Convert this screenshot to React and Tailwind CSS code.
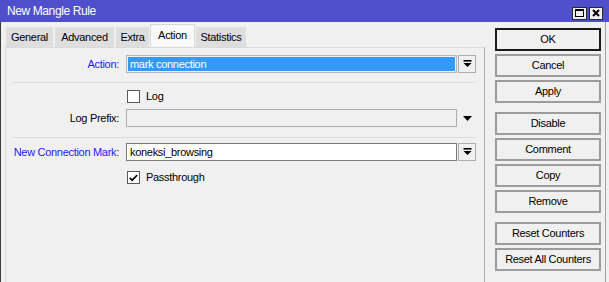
const font = { fontFamily: '"Liberation Sans", Arial, sans-serif' };

const DropIcon = () => (
  <svg width="9" height="8" viewBox="0 0 9 8">
    <rect x="0.5" y="0" width="8" height="1.6" fill="#000" />
    <path d="M0.5 3h8l-4 4z" fill="#000" />
  </svg>
);

const Checkbox = ({ checked }) => (
  <div className="w-[13px] h-[13px] border border-[#5a5a5a] bg-white flex items-center justify-center">
    {checked && (
      <svg width="9" height="8" viewBox="0 0 9 8">
        <path d="M0.8 3.8l2.4 2.5L8.2 1" stroke="#000" strokeWidth="1.8" fill="none" />
      </svg>
    )}
  </div>
);

const Label = ({ children, blue }) => (
  <div className={`w-[114px] text-right pr-[1px] ${blue ? "text-[#1a1aff]" : "text-black"}`}>
    {children}
  </div>
);

const tabs = [
  { name: "General", w: "w-[49px]" },
  { name: "Advanced", w: "w-[61px]" },
  { name: "Extra", w: "w-[35px]" },
  { name: "Action", w: "w-[45px]", active: true },
  { name: "Statistics", w: "w-[52px]" },
];

const Btn = ({ children, primary, className = "" }) => (
  <div
    className={`h-[23px] flex items-center justify-center bg-[#f0f0f0] border-2 ${
      primary ? "border-[#1a1a1a]" : "border-[#9c9c9c]"
    } ${className}`}
  >
    {children}
  </div>
);

const App = () => {
  return (
    <div
      className="w-[609px] h-[282px] overflow-hidden bg-[#f0f0f0] flex flex-col text-[11px] tracking-[-0.3px] text-black"
      style={font}
    >
      {/* title bar */}
      <div className="h-[22px] shrink-0 bg-[#4f4fcb] flex items-center pl-[7px] pr-[6px]">
        <span className="text-white text-[12px] tracking-[-0.4px]">New Mangle Rule</span>
        <div className="ml-auto flex gap-[2px] mt-[4px]">
          <div className="w-[15px] h-[13px] bg-[#f0f0f0] border border-[#2a2a2a] flex items-center justify-center">
            <div className="w-[9px] h-[8px] border border-black border-t-2" />
          </div>
          <div className="w-[14px] h-[13px] bg-[#f0f0f0] border border-[#2a2a2a] flex items-center justify-center">
            <svg width="8" height="8" viewBox="0 0 8 8">
              <path d="M1 1l6 6M7 1l-6 6" stroke="#000" strokeWidth="2" />
            </svg>
          </div>
        </div>
      </div>

      <div className="flex flex-1 border-l border-[#3a3a3a]">
        {/* left: tabs and panel */}
        <div className="w-[484px] pl-[4px] flex flex-col">
          <div className="h-[25px] flex items-end">
            {tabs.map((t) => (
              <div
                key={t.name}
                className={`${t.w} flex items-center justify-center border-t border-l border-r ${
                  t.active
                    ? "h-[23px] bg-[#f9f9f9] border-[#d9d9d9] pb-[2px]"
                    : "h-[21px] bg-[#dedede] border-[#f0f0f0]"
                }`}
              >
                {t.name}
              </div>
            ))}
          </div>

          <div className="flex-1 bg-[#f0f0f0] border-t border-l border-[#dadada] border-r border-r-[#a8a8a8] flex flex-col">
            {/* Action */}
            <div className="mt-[7px] h-[18px] flex items-center">
              <Label blue>Action:</Label>
              <div className="ml-[6px] w-[331px] h-[18px] border border-[#b8b8b8] p-[1px]">
                <div className="h-full bg-[#3399ff] text-white flex items-center pl-[2px]">
                  mark connection
                </div>
              </div>
              <div className="ml-[1px] w-[18px] h-[18px] border border-[#adadad] bg-[#f0f0f0] flex items-center justify-center">
                <DropIcon />
              </div>
            </div>

            <div className="mt-[9px] ml-[6px] w-[463px] h-px bg-[#dcdcdc]" />

            {/* Log */}
            <div className="mt-[7px] h-[13px] flex items-center">
              <div className="w-[121px]" />
              <Checkbox />
              <span className="ml-[6px]">Log</span>
            </div>

            {/* Log Prefix */}
            <div className="mt-[6px] h-[18px] flex items-center">
              <Label>Log Prefix:</Label>
              <div className="ml-[6px] w-[331px] h-[18px] border border-[#adadad] bg-[#f0f0f0]" />
              <div className="ml-[1px] w-[18px] h-[18px] flex items-center justify-center">
                <svg width="9" height="5" viewBox="0 0 9 5">
                  <path d="M0 0h9l-4.5 5z" fill="#000" />
                </svg>
              </div>
            </div>

            <div className="mt-[10px] ml-[6px] w-[463px] h-px bg-[#dcdcdc]" />

            {/* New Connection Mark */}
            <div className="mt-[5px] h-[18px] flex items-center">
              <Label blue>New Connection Mark:</Label>
              <div className="ml-[6px] w-[331px] h-[18px] border border-[#7a7a7a] bg-white flex items-center pl-[3px]">
                koneksi_browsing
              </div>
              <div className="ml-[1px] w-[18px] h-[18px] border border-[#adadad] bg-[#f0f0f0] flex items-center justify-center">
                <DropIcon />
              </div>
            </div>

            {/* Passthrough */}
            <div className="mt-[10px] h-[13px] flex items-center">
              <div className="w-[121px]" />
              <Checkbox checked />
              <span className="ml-[6px]">Passthrough</span>
            </div>
          </div>
        </div>

        {/* right: buttons */}
        <div className="ml-[10px] w-[106px] pt-[6px] flex flex-col gap-[3px]">
          <Btn primary>OK</Btn>
          <Btn>Cancel</Btn>
          <Btn>Apply</Btn>
          <Btn className="mt-[6px]">Disable</Btn>
          <Btn>Comment</Btn>
          <Btn>Copy</Btn>
          <Btn>Remove</Btn>
          <Btn className="mt-[6px]">Reset Counters</Btn>
          <Btn>Reset All Counters</Btn>
        </div>

        <div className="ml-[4px] w-px bg-[#a0a0a0]" />
      </div>
    </div>
  );
};

export default App;
